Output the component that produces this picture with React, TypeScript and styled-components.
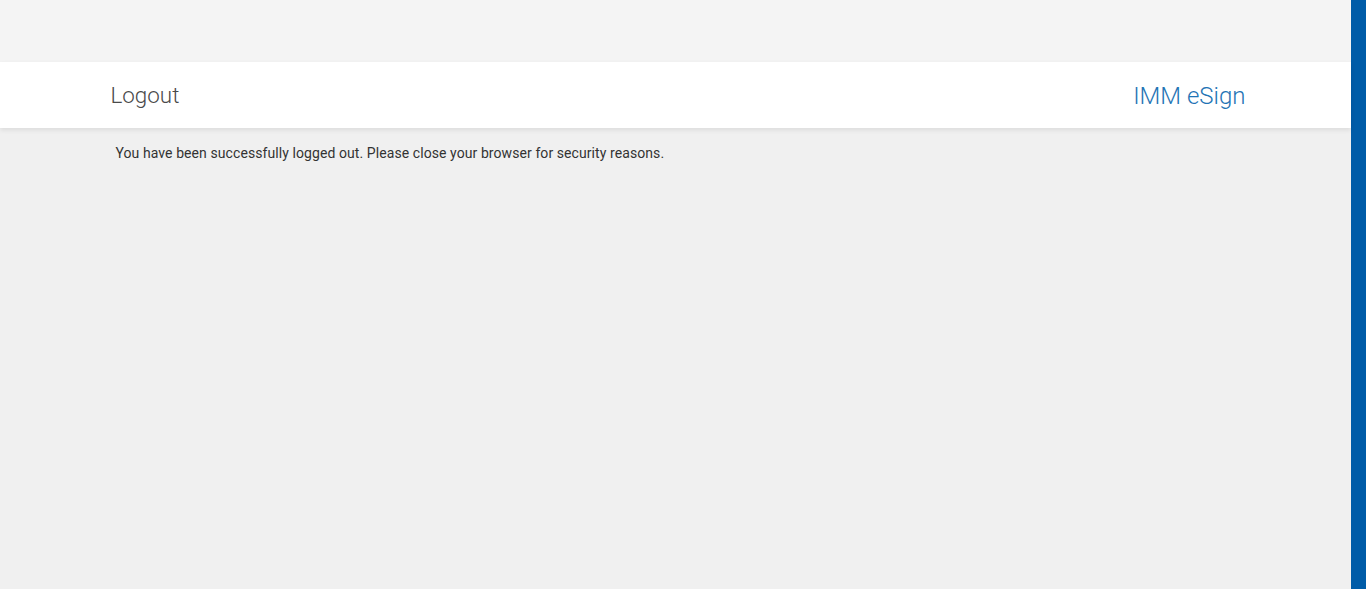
import styled, { createGlobalStyle } from "styled-components";

const GlobalStyle = createGlobalStyle`
  html, body {
    margin: 0;
    padding: 0;
    height: 100%;
  }
  body {
    font-family: Roboto, "Liberation Sans", Arial, sans-serif;
    background: #f0f0f0;
    overflow: hidden;
  }
  #root {
    height: 100%;
  }
`;

const Page = styled.div`
  display: flex;
  height: 589px;
`;

const Main = styled.div`
  flex: 1;
  display: flex;
  flex-direction: column;
  background: #f0f0f0;
`;

const TopStrip = styled.div`
  height: 62px;
  background: #f4f4f4;
`;

const Header = styled.header`
  height: 66px;
  background: #fff;
  box-shadow: 0 2px 5px rgba(0, 0, 0, 0.09);
  position: relative;
  z-index: 1;
`;

const Container = styled.div`
  width: 1140px;
  margin: 0 auto;
  box-sizing: border-box;
`;

const HeaderInner = styled(Container)`
  height: 100%;
  display: flex;
  align-items: center;
  justify-content: space-between;
  padding: 1px 0 0 5px;
`;

const Title = styled.span<{ $brand?: boolean }>`
  font-size: ${p => (p.$brand ? "24px" : "22.4px")};
  font-weight: 300;
  color: ${p => (p.$brand ? "#1f74b5" : "#4a4a4a")};
  line-height: 1;
`;

const Content = styled(Container)`
  padding: 17px 10px 0 10px;
`;

const Message = styled.p`
  margin: 0;
  font-size: 14px;
  color: #333;
  line-height: 16px;
  letter-spacing: 0.08px;
`;

const SideBar = styled.div`
  width: 15px;
  background: #005ca8;
`;

export default function App() {
  return (
    <>
      <GlobalStyle />
      <Page>
        <Main>
          <TopStrip />
          <Header>
            <HeaderInner>
              <Title>Logout</Title>
              <Title $brand>IMM eSign</Title>
            </HeaderInner>
          </Header>
          <Content>
            <Message>
              You have been successfully logged out. Please close your browser
              for security reasons.
            </Message>
          </Content>
        </Main>
        <SideBar />
      </Page>
    </>
  );
}
